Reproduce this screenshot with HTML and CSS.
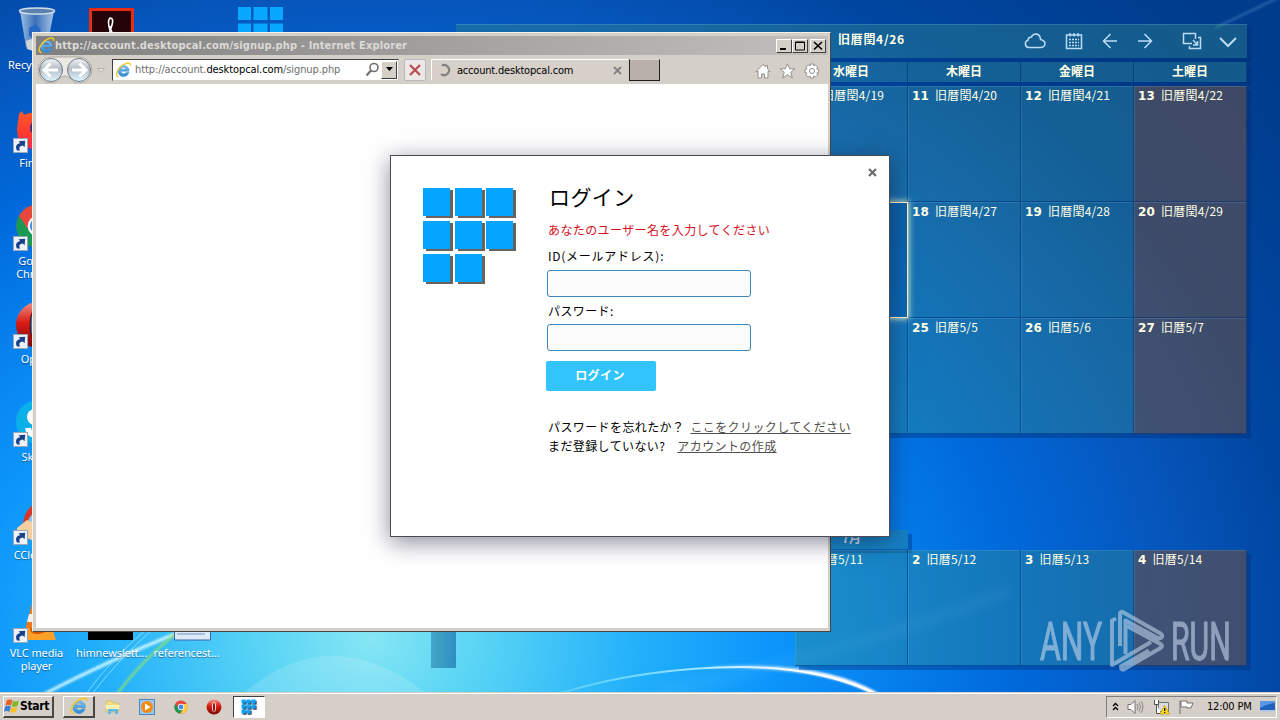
FILE: index.html
```html
<!DOCTYPE html>
<html lang="ja">
<head>
    <meta charset="UTF-8">
    <title>Desktop</title>
    <link rel="stylesheet" href="styles.css">
</head>
<body>
    <svg width="0" height="0" class="defs">
        <defs>
            <linearGradient id="ieBlue" x1="0" y1="0" x2="0" y2="1">
                <stop offset="0" stop-color="#7cc8f4"/><stop offset="1" stop-color="#2c88d4"/>
            </linearGradient>
            <linearGradient id="operaRed" x1="0" y1="0" x2="0" y2="1">
                <stop offset="0" stop-color="#f09088"/><stop offset=".45" stop-color="#d81c14"/><stop offset="1" stop-color="#780804"/>
            </linearGradient>
            <linearGradient id="navBall" x1="0" y1="0" x2="0" y2="1">
                <stop offset="0" stop-color="#f4f6f8"/><stop offset=".45" stop-color="#b4bcc6"/><stop offset="1" stop-color="#dff8ff"/>
            </linearGradient>
            <linearGradient id="fox" x1="0" y1="0" x2="0" y2="1">
                <stop offset="0" stop-color="#ff5a28"/><stop offset=".6" stop-color="#ff3a30"/><stop offset="1" stop-color="#ff2850"/>
            </linearGradient>
            <linearGradient id="bin" x1="0" y1="0" x2="1" y2="0">
                <stop offset="0" stop-color="#9cc0e4"/><stop offset=".45" stop-color="#3c70b8"/><stop offset="1" stop-color="#a4c4e8"/>
            </linearGradient>
            <symbol id="ie" viewBox="0 0 16 16">
                <path d="M13.6 9.3H5.2a3 2.9 0 0 0 5.4 1.2h2.8A5.6 5.6 0 1 1 13.6 9.3zM5.3 7.2h5.3a2.7 2.5 0 0 0-5.3 0z" fill="url(#ieBlue)" fill-rule="evenodd" stroke="#2e7cc4" stroke-width=".4"/>
                <path d="M2.6 14.6C-.8 13 2 7 6.3 3.7 10.5.6 14.8-.2 14.8 3" fill="none" stroke="#f2ca28" stroke-width="1.4" stroke-linecap="round"/>
            </symbol>
            <symbol id="chrome" viewBox="0 0 16 16">
                <circle cx="8" cy="8" r="7.5" fill="#e8483c"/>
                <path d="M1.4 4.4A7.5 7.5 0 0 0 7.2 15.5L11 9.7 8 8 5 9.8z" fill="#189a54"/>
                <path d="M8 4.6h6.7A7.5 7.5 0 0 1 7.2 15.5L11 9.6z" fill="#fccc3c"/>
                <circle cx="8" cy="8" r="3.6" fill="#fff"/>
                <circle cx="8" cy="8" r="2.8" fill="#4488e8"/>
            </symbol>
            <symbol id="opera" viewBox="0 0 16 16">
                <circle cx="8" cy="8" r="7.5" fill="url(#operaRed)"/>
                <ellipse cx="8" cy="8" rx="2.1" ry="5.2" fill="#f8e4e0"/>
                <ellipse cx="8" cy="8.2" rx="1.1" ry="4.8" fill="#a01410"/>
            </symbol>
            <symbol id="shortcut" viewBox="0 0 15 15">
                <rect x=".5" y=".5" width="14" height="14" fill="#eef2f8" stroke="#98a8bc"/>
                <path d="M4 12.5C1.5 8 4.5 5 7.2 5.2L5.6 3.2l6.6-.4-.6 6.4-1.8-1.8C7 7.6 5.2 9.4 7.2 12.5z" fill="#16428c"/>
            </symbol>
        </defs>
    </svg>

    <div class="desktop">
        <svg class="flares" width="1280" height="692" viewBox="0 0 1280 692">
            <defs>
                <linearGradient id="arcFade" gradientUnits="userSpaceOnUse" x1="560" y1="0" x2="820" y2="0">
                    <stop offset="0" stop-color="#78e0ff" stop-opacity=".5"/><stop offset=".6" stop-color="#b0ecff"/><stop offset="1" stop-color="#fff"/>
                </linearGradient>
                <linearGradient id="glowFade" gradientUnits="userSpaceOnUse" x1="700" y1="0" x2="830" y2="0">
                    <stop offset="0" stop-color="#fff" stop-opacity="0"/><stop offset="1" stop-color="#fff"/>
                </linearGradient>
                <filter id="soft" filterUnits="userSpaceOnUse" x="-20" y="-20" width="1320" height="740"><feGaussianBlur stdDeviation="1"/></filter>
                <filter id="softer" filterUnits="userSpaceOnUse" x="-20" y="-20" width="1320" height="740"><feGaussianBlur stdDeviation="5"/></filter>
            </defs>
            <path d="M245 692Q330 620 425 692z" fill="#fff" opacity=".14"/>
            <path d="M44 694Q110 660 175 634" fill="none" stroke="#c8f4ff" stroke-width="3" filter="url(#soft)"/>
            <path d="M86 694Q112 658 148 628M92 694Q118 660 154 628" fill="none" stroke="#90e4ff" stroke-width="1" opacity=".8"/>
            <path d="M117 694Q142 660 180 630" fill="none" stroke="#90e468" stroke-width="2" filter="url(#soft)"/>
            <path d="M558 694Q640 668 740 667 820 667 876 694" fill="none" stroke="url(#arcFade)" stroke-width="2"/>
            <path d="M700 668Q820 661 878 695" fill="none" stroke="url(#glowFade)" stroke-width="4" filter="url(#soft)"/>
            <path d="M660 692Q860 650 1010 590" fill="none" stroke="#70c8ff" stroke-width="12" opacity=".12" filter="url(#softer)"/>
            <path d="M1282 -4L1215 28" fill="none" stroke="#78b8e8" stroke-width="2" opacity=".35" filter="url(#soft)"/>
        </svg>

        <div class="icons">
            <div class="icon r1 c1">
                <svg viewBox="0 0 48 48"><path d="M7 5l6 36q11 6 21 0l7-36z" fill="url(#bin)"/><ellipse cx="24" cy="5" rx="17.5" ry="3" fill="#5c80ac" stroke="#d0dce8" stroke-width="1.5"/><path d="M16 22l7-4 5 6-4 8-8-2z" fill="#2868c0"/><path d="M13 35q8-5 20 0l-1 8q-9 4-18 0z" fill="#ccd4d8"/></svg>
                <span>Recycle Bin</span>
            </div>
            <div class="icon r1 c2">
                <svg viewBox="0 0 48 48"><rect x="2.500" y="3.500" width="42" height="44" fill="#240408" stroke="#e82c14" stroke-width="3"/><path d="M22 24q-3-9 0-12 4 0 2 7t-7 19M22 20q1 8 10 18" fill="none" stroke="#fff" stroke-width="1.600"/></svg>
            </div>
            <div class="icon r1 c4">
                <svg viewBox="0 0 48 48"><path d="M0 1h13v13H0zM15.500 1h14v13h-14zM32 1h13v13H32zM0 17.500h13v13H0zM15.500 17.500h14v13h-14zM32 17.500h13v13H32z" fill="#08a8ff"/></svg>
            </div>
            <div class="icon r2 c1">
                <svg viewBox="0 0 48 48"><path d="M6 10q2-2 3-3l2 4q6-3 10-2l3-3 10 8q12 10 6 20-8 13-20 11Q4 43 4 25z" fill="url(#fox)"/><circle cx="25" cy="24" r="8" fill="#442880"/></svg>
                <svg class="arrow"><use href="#shortcut"/></svg>
                <span>Firefox</span>
            </div>
            <div class="icon r3 c1">
                <svg viewBox="0 0 48 48"><use href="#chrome" x="2" y="1" width="46" height="46"/></svg>
                <svg class="arrow"><use href="#shortcut"/></svg>
                <span>Google Chrome</span>
            </div>
            <div class="icon r4 c1">
                <svg viewBox="0 0 48 48"><ellipse cx="25" cy="25" rx="22" ry="23" fill="url(#operaRed)"/><ellipse cx="25" cy="25" rx="8" ry="18" fill="#2878c0" stroke="#600" stroke-width="1"/></svg>
                <svg class="arrow"><use href="#shortcut"/></svg>
                <span>Opera</span>
            </div>
            <div class="icon r5 c1">
                <svg viewBox="0 0 48 48"><circle cx="25" cy="24" r="22" fill="#0cb0e8"/><circle cx="22" cy="19" r="8" fill="#fff"/><path d="M15 30q1 8 12 7" fill="none" stroke="#fff" stroke-width="6"/></svg>
                <svg class="arrow"><use href="#shortcut"/></svg>
                <span>Skype</span>
            </div>
            <div class="icon r6 c1">
                <svg viewBox="0 0 48 48"><path d="M30 6Q12 8 10 28l10 6 14-4z" fill="#d83828"/><path d="M20 18q-6 4-4 10l8-2z" fill="#88c8f0"/><path d="M4 32l10-8 20 8-12 14q-8-4-18-10z" fill="#f4d0a0"/></svg>
                <svg class="arrow"><use href="#shortcut"/></svg>
                <span>CCleaner</span>
            </div>
            <div class="icon r7 c1">
                <svg viewBox="0 0 48 48"><path d="M20 6h8l8 30H12z" fill="#f07818"/><path d="M16 20h16l2 8H14z" fill="#f4f0ec"/><path d="M12 34h27l4 12H6z" fill="#fca028"/><path d="M17 34h16q2 5-8 6-9 0-8-6z" fill="#d85808"/></svg>
                <svg class="arrow"><use href="#shortcut"/></svg>
                <span>VLC media player</span>
            </div>
            <div class="icon r7 c2">
                <svg viewBox="0 0 48 48"><path d="M0 2h45v44H0z" fill="#000"/></svg>
                <span>himnewslett...</span>
            </div>
            <div class="icon r7 c3">
                <svg viewBox="0 0 48 48"><path d="M11.500 4h36v42h-36z" fill="#dceaf8" stroke="#3c68b0"/><path d="M14 40h28" stroke="#7090d0"/></svg>
                <span>referencest...</span>
            </div>
        </div>

        <div class="calendar">
            <div class="cal-header">
                <b>旧暦閏4/26</b>
                <div class="cal-tools">
                    <svg width="22" height="18" viewBox="0 0 22 18"><path d="M4.500 15.500A3.700 3.700 0 0 1 4 8.300Q4 5 7.500 5 8.500 2 12 2q4.300.5 4.500 5.500 4.300.8 4.500 4.200-.2 3.300-4 3.800z"/></svg>
                    <svg width="18" height="18" viewBox="0 0 18 18"><path d="M1.500 3h15v13.500h-15zM5 1v3.500M9 1v3.500M13 1v3.500"/><path d="M4 7.500h10M4 10.500h10M4 13.500h10" stroke-dasharray="2 1"/></svg>
                    <svg width="16" height="18" viewBox="0 0 16 18"><path d="M15 9H2M8.500 2L1.500 9l7 7"/></svg>
                    <svg width="16" height="18" viewBox="0 0 16 18"><path d="M1 9h13M7.500 2l7 7-7 7"/></svg>
                    <svg width="20" height="18" viewBox="0 0 20 18" class="wide"><path d="M10 11.500H1.500v-10h12V7M16 5.500h2.500v11h-11V14M11 8l4.500 5M15.500 9v4h-4.500"/></svg>
                    <svg width="18" height="18" viewBox="0 0 18 18"><path d="M1 6l8 8 8-8" stroke-width="2"/></svg>
                </div>
            </div>
            <div class="weekdays">
                <div>水曜日</div><div>木曜日</div><div>金曜日</div><div>土曜日</div>
            </div>
            <div class="weeks">
                <div class="day"><b>10</b>旧暦閏4/19</div>
                <div class="day"><b>11</b>旧暦閏4/20</div>
                <div class="day"><b>12</b>旧暦閏4/21</div>
                <div class="day sat"><b>13</b>旧暦閏4/22</div>
                <div class="day today"><b>17</b>旧暦閏4/26</div>
                <div class="day"><b>18</b>旧暦閏4/27</div>
                <div class="day"><b>19</b>旧暦閏4/28</div>
                <div class="day sat"><b>20</b>旧暦閏4/29</div>
                <div class="day"><b>24</b>旧暦5/4</div>
                <div class="day"><b>25</b>旧暦5/5</div>
                <div class="day"><b>26</b>旧暦5/6</div>
                <div class="day sat"><b>27</b>旧暦5/7</div>
            </div>
            <div class="month">7月</div>
            <div class="weeks next">
                <div class="day"><b>1</b>旧暦5/11</div>
                <div class="day"><b>2</b>旧暦5/12</div>
                <div class="day"><b>3</b>旧暦5/13</div>
                <div class="day sat"><b>4</b>旧暦5/14</div>
            </div>
        </div>
        <div class="cal-tail"></div>

        <svg class="watermark" width="220" height="70" viewBox="0 0 220 70">
            <g class="wm-text">
                <text transform="translate(3 51) scale(.6 1)">ANY</text>
                <text transform="translate(134 51) scale(.57 1)">RUN</text>
            </g>
            <path d="M79 9.500l-4 2v44.500l39-23M83 37V4q1-2 3.500-.5l37 21q3 2 1 4l-3 1-33-18V45M90 17l33.500 18q3 2 0 4L86.500 60.500q-2.500.5-2.500-3l28-16"/>
        </svg>
    </div>

    <div class="window">
        <div class="titlebar">
            <svg width="17" height="17"><use href="#ie"/></svg>
            <span class="title">http://account.desktopcal.com/signup.php - Internet Explorer</span>
            <div class="controls">
                <i><svg width="12" height="10"><path d="M2 8h6" stroke="#000" stroke-width="2"/></svg></i>
                <i><svg width="12" height="10"><path d="M1.500 1h9v8h-9zM1 1.500h10" fill="none" stroke="#000"/></svg></i>
                <i class="gap"><svg width="12" height="10"><path d="M2 1l8 7.500M10 1L2 8.500" stroke="#000" stroke-width="1.600"/></svg></i>
            </div>
        </div>
        <div class="toolbar">
            <svg class="nav" width="68" height="28" viewBox="0 0 68 28">
                <path d="M14 1h28a13 13 0 0 1 0 26q-6 0-9-5-5-4-10 0-4 5-9 5A13 13 0 0 1 14 1z" fill="#ece8e4" stroke="#b0aca4"/>
                <circle cx="14" cy="14" r="11.500" fill="url(#navBall)" stroke="#707a84"/>
                <circle cx="42" cy="14" r="11.500" fill="url(#navBall)" stroke="#707a84"/>
                <path d="M13.500 7.500L7 14l6.500 6.500M8 14h13M42.500 7.500L49 14l-6.500 6.500M48 14H35" fill="none" stroke="#fff" stroke-width="3"/>
                <path d="M60.500 12.500h7L64 16.500z" fill="#e8e4e0" stroke="#b4b0aa"/>
            </svg>
            <div class="address">
                <svg width="17" height="16"><use href="#ie"/></svg>
                <span>http://account.<em>desktopcal.com</em>/signup.php</span>
                <svg width="15" height="15" viewBox="0 0 15 15"><circle cx="9" cy="5.500" r="4" fill="none" stroke="#707070" stroke-width="1.600"/><path d="M6 8.500L1.500 13.500" stroke="#707070" stroke-width="2.200"/></svg>
                <i class="drop"><svg width="9" height="5"><path d="M1 0h7L4.500 4z"/></svg></i>
            </div>
            <div class="stop"><svg width="12" height="12" viewBox="0 0 12 12"><path d="M1 1l10 10M11 1L1 11" stroke="#b84c50" stroke-width="2.200"/></svg></div>
            <div class="tab">
                <svg width="14" height="14" viewBox="0 0 14 14"><path d="M4 2.500a5 5 0 1 1-1 8.500" fill="none" stroke="#808080" stroke-width="2.200"/></svg>
                <span>account.desktopcal.com</span>
                <svg width="9" height="9" viewBox="0 0 9 9"><path d="M1 1l7 7M8 1L1 8" stroke="#808080" stroke-width="1.800"/></svg>
            </div>
            <div class="newtab"></div>
            <div class="tools">
                <svg width="16" height="16" viewBox="0 0 16 16"><path d="M1 8.500L8 1.500l2.500 2.300V2.500h2v3.300L15 8.500h-2V15H9.500v-4h-3v4H3V8.500z"/></svg>
                <svg width="17" height="16" viewBox="0 0 17 16"><path d="M8.500.8l2.200 5h5.300l-4.200 3.500 1.600 5.700-4.900-3.300L3.600 15l1.600-5.700L1 5.800h5.300z"/></svg>
                <svg width="16" height="16" viewBox="0 0 16 16"><path d="M6.500 1h3l.4 2 1.600-1.100 2.200 2.100-1.100 1.800 2.100.5v3.200l-2 .5 1 1.800-2.100 2.100-1.800-1-.5 2.100h-3L6 13l-1.900 1L2 11.900l1-1.800L1 9.500V6.400l2-.5L2 4.100 4.200 2 6 3z"/><circle cx="8" cy="8" r="2.500"/></svg>
            </div>
        </div>
        <div class="page"></div>
    </div>

    <div class="dialog">
        <svg class="close" width="9" height="9" viewBox="0 0 9 9"><path d="M1 1l7 7M8 1L1 8" stroke="#6c6c6c" stroke-width="2.200"/></svg>
        <div class="logo"><i></i><i></i><i></i><i></i><i></i><i></i><i></i><i></i></div>
        <form class="login">
            <h1>ログイン</h1>
            <p class="error">あなたのユーザー名を入力してください</p>
            <label for="user" class="wide">ID(メールアドレス):</label>
            <input id="user" type="text">
            <label for="pass">パスワード:</label>
            <input id="pass" type="password">
            <button type="button">ログイン</button>
            <p class="help">パスワードを忘れたか？<a class="first">ここをクリックしてください</a></p>
            <p class="help">まだ登録していない?<a>アカウントの作成</a></p>
        </form>
    </div>

    <div class="taskbar">
        <div class="start">
            <svg width="16" height="16" viewBox="0 0 17 16"><path d="M3 2q3-2 6 0L7.500 7.500q-3-1.500-6 0z" fill="#e86028"/><path d="M9.800 2.500q3 1.500 6-.3L14.300 8q-3 1.500-6 0z" fill="#80b828"/><path d="M1.300 8.500q3-1.500 6 0L5.800 14q-3-1.500-6 0z" fill="#3880d8"/><path d="M8 9q3 1.500 6 0l-1.500 5.300q-3 1.500-6 0z" fill="#f8c020"/></svg>
            <b>Start</b>
        </div>
        <div class="task"><svg width="18" height="18"><use href="#ie"/></svg></div>
        <div class="quick">
            <svg width="16" height="16" viewBox="0 0 16 16"><path d="M1 2h6l1 2h6v9H1z" fill="#f0dc84" stroke="#d0b458" stroke-width=".6"/><path d="M0 6h15l-1 4H1z" fill="#fbf0b0"/><path d="M3 15v-5h10v5h-3v-2.500H6V15z" fill="#60b8e8"/></svg>
            <svg width="16" height="16" viewBox="0 0 16 16"><rect x=".5" y=".5" width="15" height="15" fill="#9cc8ec" stroke="#4888c8"/><circle cx="8" cy="8" r="6" fill="#f48a14"/><path d="M6 4.500v7l5.500-3.500z" fill="#fff"/></svg>
            <svg width="14" height="14"><use href="#chrome"/></svg>
            <svg width="16" height="16"><use href="#opera"/></svg>
        </div>
        <div class="task active">
            <svg width="16" height="16" viewBox="0 0 16 16"><path d="M1 1h4v4H1zM6 1h4v4H6zM11 1h4v4h-4zM1 6h4v4H1zM6 6h4v4H6zM11 6h4v4h-4zM1 11h4v4H1zM6 11h4v4H6z" fill="#404858" transform="translate(.7 .7)"/><path d="M.5.500h4v4h-4zM5.500.500h4v4h-4zM10.500.500h4v4h-4zM.5 5.500h4v4h-4zM5.500 5.500h4v4h-4zM10.500 5.500h4v4h-4zM.5 10.500h4v4h-4zM5.500 10.500h4v4h-4z" fill="#08a4fc"/></svg>
        </div>
        <div class="tray">
            <svg width="7" height="9" viewBox="0 0 7 9"><path d="M1 4l2.500-2.500L6 4M1 8l2.500-2.500L6 8" fill="none" stroke="#000" stroke-width="1.400"/></svg>
            <svg width="17" height="16" viewBox="0 0 17 16"><path d="M1 5.500h3l4-4v13l-4-4H1z" fill="#fff" stroke="#707070"/><path d="M10 5q2 3 0 6M12 3.500q3 4.500 0 9M14 2q4 6 0 12" fill="none" stroke="#888"/></svg>
            <svg width="17" height="16" viewBox="0 0 17 16"><path d="M5.500 3.500h10v9h-10z" fill="#d8dce0" stroke="#707478"/><path d="M1.500 1v4.500h4V1M3.500 5v9.500H8" fill="#fff" stroke="#505050"/><path d="M11.500 6L16.500 15H7z" fill="#ffdc18" stroke="#a08000" stroke-width=".5"/><path d="M11.700 9v3M11.700 13v1" stroke="#000" stroke-width="1.200"/></svg>
            <svg width="17" height="16" viewBox="0 0 17 16"><path d="M2 1.500V15M3 2h6v2h6l-2 5H9V8H3z" fill="#fff" stroke="#707070"/></svg>
            <time>12:00 PM</time>
            <svg width="15" height="13" viewBox="0 0 15 13"><path d="M0 1h15v9H0z" fill="#2060c0"/><path d="M0 1h15v2Q6 4 0 8z" fill="#5898e4"/><path d="M0 10h15v2H0z" fill="#b8c8dc"/></svg>
        </div>
    </div>
</body>
</html>
```
FILE: styles.css
```css
* {
    margin: 0;
    padding: 0;
    box-sizing: border-box;
}

body {
    width: 1280px;
    height: 720px;
    overflow: hidden;
    position: relative;
    font-family: "DejaVu Sans Condensed", "Noto Sans", "Noto Sans CJK JP", sans-serif;
    font-size: 11px;
    color: #000;
}

svg {
    display: block;
    flex: none;
}

.defs {
    position: absolute;
}

/* Desktop */
.desktop {
    position: absolute;
    inset: 0;
    background: radial-gradient(ellipse 1000px 800px at 370px 640px, #86e6f4 0%, #5cd6f4 10%, #22b0fa 27%, #0c96fb 40%, #0680ee 52%, #006adc 64%, #0656bc 80%, #0046a0 93%, #003c8c 115%);
}

.flares {
    position: absolute;
    top: 0;
    left: 0;
}

.icons {
    position: absolute;
    left: -1px;
    top: 0;
    display: grid;
    grid-template-columns: repeat(4, 75px);
    grid-template-rows: repeat(7, 98px);
}

.r1 { grid-row: 1; }
.r2 { grid-row: 2; }
.r3 { grid-row: 3; }
.r4 { grid-row: 4; }
.r5 { grid-row: 5; }
.r6 { grid-row: 6; }
.r7 { grid-row: 7; }
.c1 { grid-column: 1; }
.c2 { grid-column: 2; }
.c3 { grid-column: 3; }
.c4 { grid-column: 4; }

.icon {
    position: relative;
    display: flex;
    flex-direction: column;
    align-items: center;
    gap: 4px;
    padding-top: 6px;
    color: #fff;
    line-height: 13px;
    text-align: center;
    text-shadow: 0 1px 1px rgba(0, 30, 80, 0.5);
}

.icon > svg {
    width: 48px;
    height: 48px;
}

.icon > .arrow {
    position: absolute;
    left: 14px;
    top: 40px;
    width: 15px;
    height: 15px;
}

.icon span {
    max-width: 62px;
    font-family: "Noto Sans", sans-serif;
    letter-spacing: -0.1px;
}

.c2 span,
.c3 span {
    max-width: none;
}

/* Desktop calendar */
.calendar {
    position: absolute;
    left: 456px;
    top: 24px;
    width: 791px;
    font-family: "Noto Sans CJK JP", sans-serif;
    font-size: 12px;
    color: #ffffe6;
}

.cal-header,
.weekdays,
.weeks,
.month {
    box-shadow: 4px 4px 0 rgba(0, 40, 110, 0.35);
}

.cal-header {
    height: 34px;
    display: flex;
    align-items: center;
    justify-content: space-between;
    padding: 0 10px 5px 382px;
    background: rgba(54, 140, 132, 0.37);
    border-top: 1px solid rgba(130, 190, 220, 0.25);
}

.cal-header b {
    margin-top: -2px;
    letter-spacing: 0.7px;
}

.cal-tools {
    display: flex;
    align-items: center;
    gap: 19px;
    padding-top: 4px;
}

.cal-tools svg {
    fill: none;
    stroke: #bcdcf4;
    stroke-width: 1.5;
}

.cal-tools .wide {
    margin: 0 -2px 0 10px;
}

.weekdays,
.weeks {
    display: grid;
    grid-template-columns: repeat(4, 113px);
    width: 452px;
    margin-left: 339px;
}

.weekdays {
    height: 20px;
    margin-top: 4px;
    background: rgba(54, 140, 132, 0.37);
    font-weight: bold;
    line-height: 18px;
    text-align: center;
}

.weekdays div {
    border-right: 1px solid rgba(0, 40, 110, 0.5);
}

.weeks {
    grid-auto-rows: 116px;
    margin-top: 4px;
}

.day {
    padding: 0 0 0 4px;
    background: rgba(54, 140, 132, 0.37);
    border: 1px solid rgba(0, 40, 110, 0.5);
    border-width: 0 1px 1px 0;
    box-shadow: inset 1px 1px 0 rgba(120, 190, 230, 0.2);
    line-height: 17px;
    white-space: nowrap;
    letter-spacing: 0.2px;
}

.day b {
    display: inline-block;
    margin-right: 6px;
    font-family: "DejaVu Sans", sans-serif;
}

.sat {
    background: rgba(96, 80, 78, 0.65);
}

.today {
    position: relative;
    background: rgba(30, 110, 120, 0.35);
    border: 1px solid #fff4c4;
    box-shadow: 0 0 6px 1px #d0e8c8;
}

.month {
    width: 113px;
    height: 19px;
    margin: 96px 0 0 339px;
    background: rgba(54, 140, 132, 0.37);
    font-weight: bold;
    line-height: 16px;
    text-align: center;
    color: #dceef4;
}

.next {
    margin-top: 1px;
}

.cal-tail {
    position: absolute;
    left: 431px;
    top: 600px;
    width: 25px;
    height: 68px;
    background: linear-gradient(90deg, rgba(44, 128, 170, 0.6), rgba(28, 120, 176, 0.75));
}

.watermark {
    position: absolute;
    left: 1037px;
    top: 609px;
    opacity: 0.62;
}

.watermark path {
    fill: none;
    stroke: #b8cce4;
    stroke-width: 4;
    stroke-linejoin: round;
}

.wm-text {
    font-family: Roboto, sans-serif;
    font-size: 53px;
    fill: #c0d2ea;
    stroke: #c0d2ea;
    stroke-width: 1.2;
}

/* Browser window */
.window {
    position: absolute;
    left: 32px;
    top: 32px;
    width: 799px;
    height: 600px;
    padding: 2px 2px 3px 3px;
    display: flex;
    flex-direction: column;
    background: #d4d0c8;
    border: 1px solid #f4f2ee;
    border-right-color: #484644;
    border-bottom-color: #484644;
}

.titlebar {
    height: 19px;
    margin-top: 1px;
    display: flex;
    align-items: center;
    padding: 0 2px;
    background: linear-gradient(90deg, #808080, #c2c0be);
    color: #dcdad6;
}

.title {
    flex: 1;
    font-family: "DejaVu Sans Condensed", sans-serif;
    font-weight: bold;
    font-size: 11px;
    letter-spacing: 0.15px;
    white-space: nowrap;
}

.controls {
    display: flex;
}

.controls i {
    width: 16px;
    height: 14px;
    display: flex;
    align-items: center;
    justify-content: center;
    background: #d4d0c8;
    border: 1px solid #fff;
    border-right-color: #404040;
    border-bottom-color: #404040;
}

.controls .gap {
    margin-left: 2px;
}

.toolbar {
    height: 29px;
    display: flex;
    align-items: center;
    padding: 0 8px 0 1px;
}

.address {
    width: 287px;
    height: 22px;
    margin: 0 5px 0 7px;
    display: flex;
    align-items: center;
    padding: 1px 1px 1px 2px;
    background: #fff;
    border: 1px solid #404040;
    border-right-color: #d4d0c8;
    border-bottom-color: #d4d0c8;
    color: #6e6e6e;
}

.address span {
    flex: 1;
    margin-left: 3px;
    letter-spacing: -0.1px;
}

.address em {
    font-style: normal;
    color: #000;
}

.drop {
    width: 16px;
    height: 18px;
    margin-left: 1px;
    display: flex;
    align-items: center;
    justify-content: center;
    background: #d4d0c8;
    border: 1px solid #fff;
    border-right-color: #404040;
    border-bottom-color: #404040;
}

.stop {
    width: 22px;
    height: 22px;
    display: flex;
    align-items: center;
    justify-content: center;
    background: #ece8e8;
    border: 1px solid #b8b8bc;
    border-radius: 2px;
}

.tab {
    width: 197px;
    height: 21px;
    margin-left: 5px;
    display: flex;
    align-items: center;
    padding: 0 6px 0 6px;
    background: #d7d0c9;
    border-top: 1px solid #fff;
    border-left: 1px solid #fff;
}

.tab span {
    flex: 1;
    margin-left: 5px;
    letter-spacing: -0.2px;
}

.newtab {
    width: 31px;
    height: 22px;
    margin-left: 1px;
    background: #b9b1a9;
    border: 1px solid #202020;
    border-top-color: #d8d4d0;
}

.tools {
    flex: 1;
    display: flex;
    justify-content: flex-end;
    gap: 8px;
    padding-top: 3px;
}

.tools svg {
    fill: #fff;
    stroke: #94908c;
}

.page {
    flex: 1;
    background: #fff;
}

/* Login dialog */
.dialog {
    position: absolute;
    left: 390px;
    top: 155px;
    width: 500px;
    height: 382px;
    display: flex;
    padding: 32px 0 0 32px;
    background: #fff;
    border: 1px solid #4a4a52;
    box-shadow: 0 5px 22px rgba(16, 20, 50, 0.5);
    font-family: "Noto Sans CJK JP", sans-serif;
    font-size: 12px;
    letter-spacing: 0.4px;
}

.close {
    position: absolute;
    right: 12px;
    top: 12px;
}

.logo {
    width: 124px;
    display: grid;
    grid-template-columns: repeat(3, 27px);
    grid-auto-rows: 28px;
    align-content: start;
    gap: 5px 4.6px;
}

.logo i {
    background: #05a4ff;
    box-shadow: 3px 2px 0 #69635f;
}

.login {
    flex: 1;
    display: flex;
    flex-direction: column;
    align-items: flex-start;
}

.login h1 {
    margin: -7px 0 0 2px;
    font-size: 21px;
    font-weight: normal;
    line-height: 30px;
    letter-spacing: 0.4px;
}

.error {
    margin: 10px 0 9px 1px;
    line-height: 18px;
    color: #d8101c;
}

.login label {
    height: 21px;
    margin-left: 1px;
    line-height: 16px;
}

.login .wide {
    height: 22px;
    letter-spacing: 0.75px;
}

.login input {
    width: 204px;
    height: 27px;
    margin-bottom: 6px;
    background: #fcfcfd;
    border: 1px solid #3c88b8;
    border-radius: 3px;
}

.login button {
    width: 110px;
    height: 30px;
    margin: 4px 0 26px -1px;
    padding: 0 2px 3px 0;
    background: #31c4fd;
    border: none;
    border-radius: 2px;
    font: bold 12px "Noto Sans CJK JP", sans-serif;
    letter-spacing: 0.4px;
    color: #fff;
}

.help {
    margin-left: 1px;
    line-height: 19px;
    white-space: nowrap;
}

.help a {
    margin-left: 12px;
    color: #505050;
    text-decoration: underline;
}

.help .first {
    margin-left: 6px;
}

/* Taskbar */
.taskbar {
    position: absolute;
    left: 0;
    right: 0;
    bottom: 0;
    height: 28px;
    display: flex;
    align-items: center;
    padding: 2px 3px 2px;
    background: #d5cfc7;
    border-top: 1px solid #d5cfc7;
    box-shadow: inset 0 1px 0 #fff;
}

.start,
.task {
    height: 22px;
    display: flex;
    align-items: center;
    border: 1px solid #fff;
    border-right: 2px solid #484644;
    border-bottom: 2px solid #484644;
}

.start {
    width: 51px;
    font-family: "DejaVu Sans Condensed", sans-serif;
    font-size: 12px;
    letter-spacing: -0.3px;
}

.task {
    width: 32px;
    margin-left: 9px;
    justify-content: center;
}

.active {
    background: #fff;
    border: 1px solid #fff;
    border-top-color: #404040;
    border-left-color: #404040;
}

.quick {
    width: 129px;
    display: flex;
    align-items: center;
    justify-content: space-between;
    padding: 0 2px 0 10px;
}

.tray {
    width: 171px;
    height: 22px;
    margin-left: auto;
    display: flex;
    align-items: center;
    justify-content: space-between;
    padding: 0 1px 0 5px;
    border: 1px solid #808080;
    border-right-color: #fff;
    border-bottom-color: #fff;
}

.tray time {
    margin-left: 3px;
    letter-spacing: -0.2px;
}
```
